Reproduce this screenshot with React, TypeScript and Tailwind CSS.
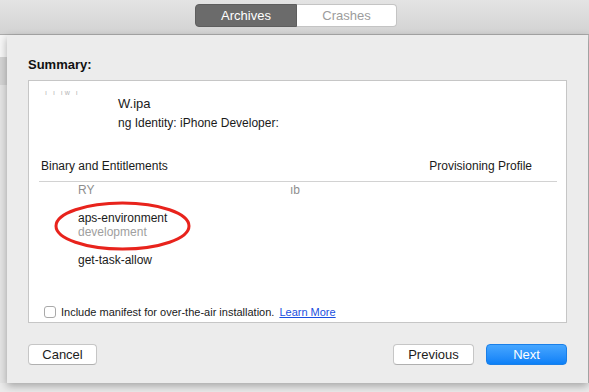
import React from "react";

const font = { fontFamily: '"Liberation Sans", Arial, sans-serif' };

const Segmented = () => (
  <div className="flex h-[23px] text-[13px] leading-[21px]">
    <div className="w-[102px] rounded-l-[4px] border border-[#5e5e5e] bg-[#6b6b6b] text-center text-white">
      Archives
    </div>
    <div className="w-[100px] rounded-r-[4px] border border-l-0 border-[#c4c4c4] bg-white text-center text-[#9c9c9c]">
      Crashes
    </div>
  </div>
);

const Button = ({ label, primary, width }: { label: string; primary?: boolean; width: string }) => (
  <div
    className={
      "h-[21px] rounded-[4px] text-center text-[13px] leading-[19px] " +
      width +
      (primary
        ? " border border-[#1a7fe8] bg-gradient-to-b from-[#45a6ff] to-[#0a80f7] text-white"
        : " border border-[#c6c6c6] border-b-[#b0b0b0] bg-white text-[#1c1c1c]")
    }
  >
    {label}
  </div>
);

const Summary = () => (
  <div className="relative flex h-[243px] w-[539px] flex-col border border-[#c6c6c6] bg-white text-[12px] text-[#1a1a1a]">
    {/* header */}
    <div className="flex">
      <div className="w-[89px] pl-[16px] pt-[8px] text-[7px] leading-[8px] tracking-[2px] text-[#b5b5b5]">
        ı ı ıw ı
      </div>
      <div>
        <p className="pt-[15px] text-[13px] leading-[16px]">W.ipa</p>
        <p className="mt-[3px] leading-[16px]">ng Identity: iPhone Developer:</p>
      </div>
    </div>

    {/* columns */}
    <div className="mt-[27px] flex justify-between pl-[12px] pr-[34px] leading-[16px]">
      <span>Binary and Entitlements</span>
      <span>Provisioning Profile</span>
    </div>
    <div className="ml-[10px] mr-[9px] mt-[7px] h-px bg-[#d2d2d2]" />

    <div className="mt-px flex leading-[14px] text-[#8e8e8e]">
      <span className="w-[261px] pl-[49px]">RY</span>
      <span>ıb</span>
    </div>

    <div className="pl-[49px] leading-[14px]">
      <p className="mt-[14px]">aps-environment</p>
      <p className="text-[#a0a0a0]">development</p>
      <p className="mt-[14px]">get-task-allow</p>
    </div>

    <svg
      className="absolute left-[25px] top-[120px]"
      width="137"
      height="50"
      viewBox="0 0 137 50"
    >
      <ellipse cx="68.5" cy="25" rx="66.5" ry="23" fill="none" stroke="#e8231c" strokeWidth="3" />
    </svg>

    {/* manifest */}
    <div className="mt-auto flex items-center pb-[3px] pl-[15px] text-[11px] leading-[14px]">
      <div className="h-[12px] w-[12px] rounded-[3px] border border-[#a9a9a9] bg-white" />
      <span className="ml-[5px]">Include manifest for over-the-air installation.</span>
      <span className="ml-[5px] text-[#1a4fe0] underline">Learn More</span>
    </div>
  </div>
);

export default function App() {
  return (
    <div className="relative h-[392px] w-[589px] overflow-hidden bg-[#ebebeb]" style={font}>
      <div className="flex h-[35px] justify-center border-b border-[#ababab] bg-gradient-to-b from-[#e4e4e4] to-[#d3d3d3] pl-[3px] pt-[4px]">
        <Segmented />
      </div>

      <div className="flex">
        <div className="w-[7px]">
          <div className="h-[22px] bg-[#f6f6f6]" />
          <div className="h-[28px] bg-[#d4d4d4]" />
          <div className="h-[298px] bg-[#e4e4e4]" />
        </div>

        <div className="z-10 flex h-[348px] w-[581px] flex-col bg-[#ececec] pl-[21px] pt-[22px] shadow-[0_3px_8px_rgba(0,0,0,0.3)]">
          <p className="text-[13px] font-bold leading-[16px] text-[#111]">Summary:</p>
          <div className="mt-[7px]">
            <Summary />
          </div>
          <div className="mt-[21px] flex w-[539px] items-center">
            <Button label="Cancel" width="w-[69px]" />
            <div className="flex-1" />
            <Button label="Previous" width="w-[81px]" />
            <div className="w-[12px]" />
            <Button label="Next" primary width="w-[81px]" />
          </div>
        </div>

        <div className="w-px bg-[#bcbcbc]" />
      </div>
    </div>
  );
}
